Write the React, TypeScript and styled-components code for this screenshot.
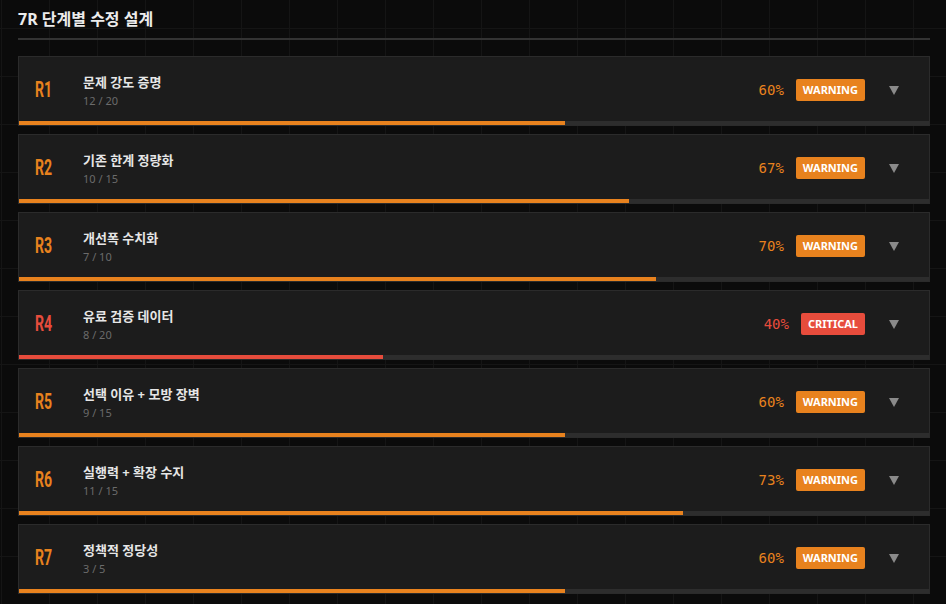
import React from 'react';
import styled, { createGlobalStyle } from 'styled-components';

const GlobalStyle = createGlobalStyle`
  html, body {
    margin: 0;
    padding: 0;
    background: #0b0b0b;
  }
  body {
    font-family: "Noto Sans", "Noto Sans CJK KR", sans-serif;
  }
`;

const ORANGE = '#e8821e';
const RED = '#e74c3c';

const Page = styled.div`
  width: 946px;
  height: 604px;
  box-sizing: border-box;
  padding: 9px 16px 0 18px;
  overflow: hidden;
  background-color: #0b0b0b;
  background-image:
    linear-gradient(to right, #151515 1px, transparent 1px),
    linear-gradient(to bottom, #151515 1px, transparent 1px);
  background-size: 48px 48px;
  background-position: 1px 28px;
`;

const Header = styled.div`
  padding-bottom: 9px;
  border-bottom: 2px solid #333333;
  margin-bottom: 16px;
`;

const Title = styled.h1`
  margin: 0;
  font-family: "Noto Sans", "Noto Sans CJK KR", sans-serif;
  font-size: 16px;
  line-height: 20px;
  font-weight: 700;
  color: #ececec;
`;

const List = styled.div`
  display: flex;
  flex-direction: column;
  gap: 8px;
`;

const Card = styled.div`
  display: flex;
  flex-direction: column;
  background: #1c1c1c;
  border: 1px solid #2b2b2b;
  overflow: hidden;
`;

const Row = styled.div`
  height: 64px;
  display: flex;
  align-items: center;
  padding: 0 30px 0 16px;
`;

const StepLabel = styled.div<{ $color: string }>`
  width: 48px;
  flex-shrink: 0;
  color: ${({ $color }) => $color};
  font-family: Roboto, "Liberation Sans", sans-serif;
  font-weight: 700;
  font-size: 22px;
  line-height: 22px;
  margin-top: 2px;

  span {
    display: inline-block;
    transform: scaleX(0.64);
    transform-origin: left center;
  }
`;

const Info = styled.div`
  flex: 1;
  display: flex;
  flex-direction: column;
  gap: 3px;
  margin-top: 3px;
`;

const Name = styled.div`
  font-family: "Noto Sans", "Noto Sans CJK KR", sans-serif;
  font-size: 13px;
  line-height: 18px;
  font-weight: 700;
  color: #e6e6e6;
`;

const Count = styled.div`
  font-family: "Noto Sans", sans-serif;
  font-size: 11px;
  line-height: 14px;
  color: #6b6b6b;
`;

const Percent = styled.div<{ $color: string }>`
  font-family: "DejaVu Sans Mono", monospace;
  font-size: 14px;
  letter-spacing: 0;
  color: ${({ $color }) => $color};
  margin-right: 12px;
  margin-top: 1px;
`;

const Badge = styled.div<{ $color: string }>`
  height: 22px;
  display: flex;
  align-items: center;
  padding: 0 7px;
  border-radius: 2px;
  background: ${({ $color }) => $color};
  color: #ffffff;
  font-family: "Noto Sans", sans-serif;
  font-size: 11px;
  font-weight: 700;
  letter-spacing: 0;
  margin-top: 1px;
`;

const Caret = styled.div`
  margin-left: 24px;
  margin-top: 2px;
  width: 0;
  height: 0;
  border-left: 5px solid transparent;
  border-right: 5px solid transparent;
  border-top: 9px solid #8a8a8a;
`;

const Track = styled.div`
  height: 4px;
  background: #2d2d2d;
`;

const Fill = styled.div<{ $color: string }>`
  height: 100%;
  background: ${({ $color }) => $color};
`;

type Step = {
  id: string;
  name: string;
  done: number;
  total: number;
  pct: number;
  level: 'WARNING' | 'CRITICAL';
};

const steps: Step[] = [
  { id: 'R1', name: '문제 강도 증명', done: 12, total: 20, pct: 60, level: 'WARNING' },
  { id: 'R2', name: '기존 한계 정량화', done: 10, total: 15, pct: 67, level: 'WARNING' },
  { id: 'R3', name: '개선폭 수치화', done: 7, total: 10, pct: 70, level: 'WARNING' },
  { id: 'R4', name: '유료 검증 데이터', done: 8, total: 20, pct: 40, level: 'CRITICAL' },
  { id: 'R5', name: '선택 이유 + 모방 장벽', done: 9, total: 15, pct: 60, level: 'WARNING' },
  { id: 'R6', name: '실행력 + 확장 수지', done: 11, total: 15, pct: 73, level: 'WARNING' },
  { id: 'R7', name: '정책적 정당성', done: 3, total: 5, pct: 60, level: 'WARNING' },
];

const App = () => {
  return (
    <>
      <GlobalStyle />
      <Page>
        <Header>
          <Title>7R 단계별 수정 설계</Title>
        </Header>
        <List>
          {steps.map((step) => {
            const color = step.level === 'CRITICAL' ? RED : ORANGE;
            return (
              <Card key={step.id}>
                <Row>
                  <StepLabel $color={color}>
                    <span>{step.id}</span>
                  </StepLabel>
                  <Info>
                    <Name>{step.name}</Name>
                    <Count>{step.done} / {step.total}</Count>
                  </Info>
                  <Percent $color={color}>{step.pct}%</Percent>
                  <Badge $color={color}>{step.level}</Badge>
                  <Caret />
                </Row>
                <Track>
                  <Fill $color={color} style={{ width: `${step.pct}%` }} />
                </Track>
              </Card>
            );
          })}
        </List>
      </Page>
    </>
  );
};

export default App;
